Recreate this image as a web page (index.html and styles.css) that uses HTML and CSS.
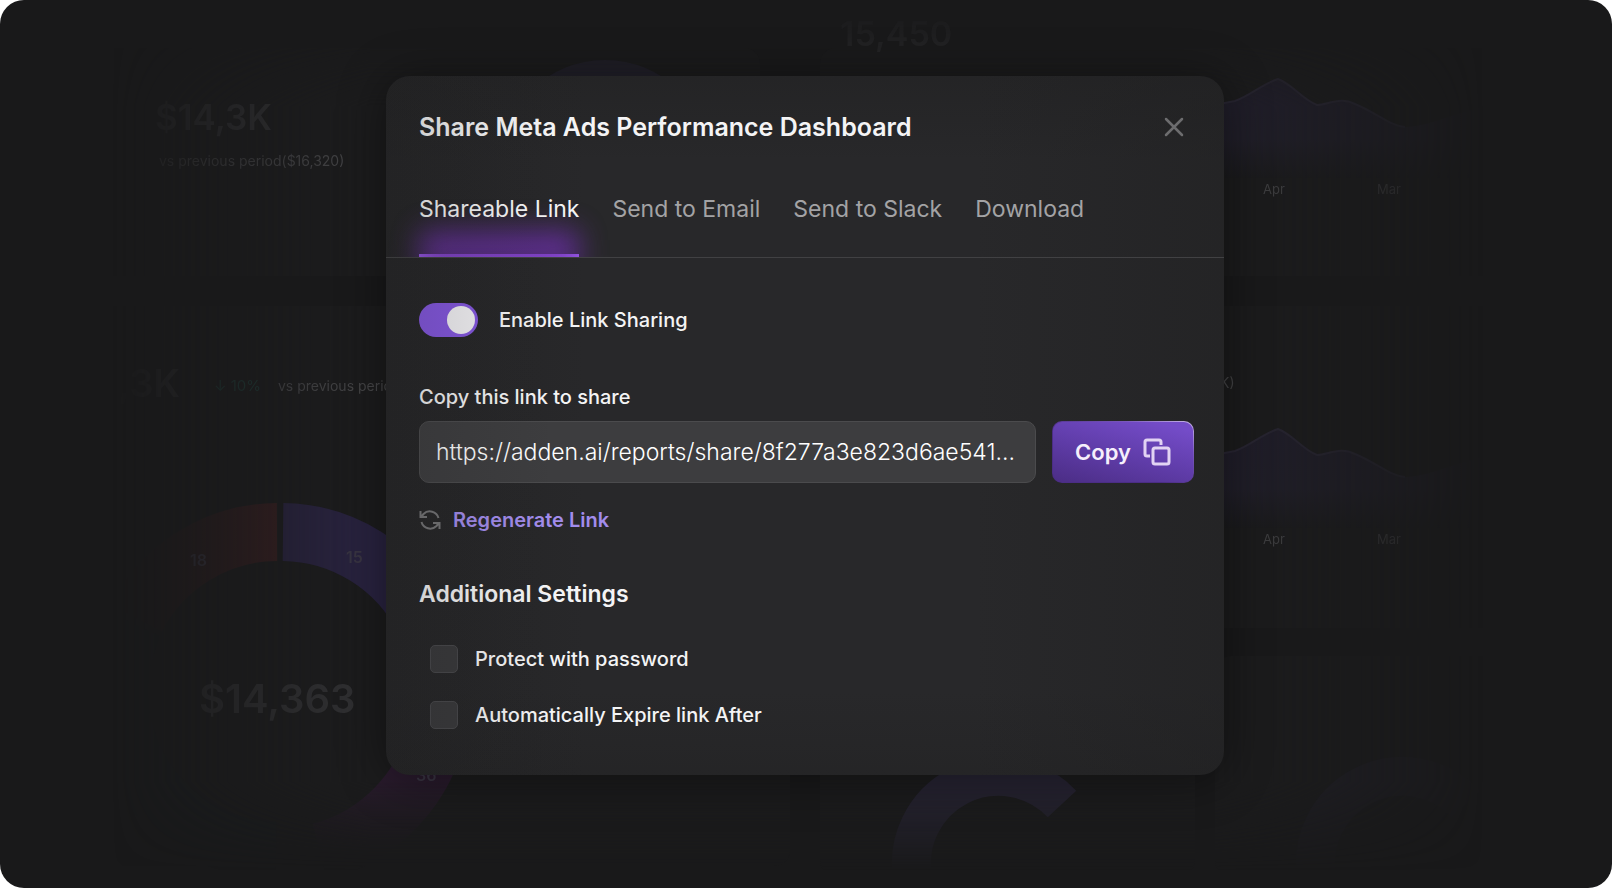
FILE: index.html
```
<!DOCTYPE html>
<html lang="en">
<head>
  <meta charset="UTF-8">
  <meta name="viewport" content="width=device-width, initial-scale=1.0">
  <title>Share Meta Ads Performance Dashboard</title>
  <link rel="stylesheet" href="styles.css">
</head>
<body>

  <div class="page">

    <!-- Dimmed dashboard behind the dialog -->
    <svg class="backdrop" viewBox="0 0 1612 888" preserveAspectRatio="xMidYMid slice" aria-hidden="true">
      <defs>
        <linearGradient id="area" x1="0" y1="0" x2="0" y2="1">
          <stop offset="0" stop-color="#211e2c"/>
          <stop offset="0.6" stop-color="#211f2a"/>
          <stop offset="1" stop-color="#1b1b1d"/>
        </linearGradient>
        <linearGradient id="red" x1="0" y1="0" x2="1" y2="0">
          <stop offset="0" stop-color="#1f1a1b"/>
          <stop offset="1" stop-color="#361e20"/>
        </linearGradient>
        <linearGradient id="pink" x1="0" y1="0" x2="0" y2="1">
          <stop offset="0.3" stop-color="#2c1b30"/>
          <stop offset="1" stop-color="#1c1b1d"/>
        </linearGradient>
        <g id="chart">
          <path fill="url(#area)" d="M1180 108 C1205 108 1220 104 1235 101 C1250 96 1262 84 1278 79 C1292 84 1303 100 1317 105 C1328 105 1340 96 1355 104 C1375 112 1390 126 1405 127 C1425 127 1450 115 1490 105 V178 H1180 Z"/>
          <path fill="none" stroke="#2a2735" stroke-width="2" d="M1180 108 C1205 108 1220 104 1235 101 C1250 96 1262 84 1278 79 C1292 84 1303 100 1317 105 C1328 105 1340 96 1355 104 C1375 112 1390 126 1405 127"/>
          <text class="muted" x="1263" y="194" font-size="13">Apr</text>
          <text class="muted" x="1377" y="194" font-size="13">Mar</text>
        </g>
      </defs>

      <g fill="#1c1c1d">
        <rect x="100" y="48" width="660" height="228" rx="16"/>
        <rect x="100" y="306" width="690" height="560" rx="16"/>
        <rect x="820" y="48" width="690" height="228" rx="16"/>
        <rect x="820" y="306" width="690" height="322" rx="16"/>
        <rect x="820" y="656" width="375" height="220" rx="16"/>
        <rect x="1215" y="656" width="295" height="220" rx="16"/>
      </g>

      <text class="figure" x="155" y="130" font-size="35">$14,3K</text>
      <text class="muted" x="159" y="166" font-size="14">vs previous period($16,320)</text>
      <text class="figure" x="118" y="397" font-size="38">,3K</text>
      <text class="up" x="214" y="391" font-size="15">↓ 10%</text>
      <text class="muted" x="278" y="391" font-size="14">vs previous period</text>
      <text class="figure" x="840" y="46" font-size="34">15,450</text>
      <text class="muted" x="1220" y="388" font-size="14">K)</text>

      <circle cx="605" cy="166" r="106" fill="#24222f"/>

      <!-- spend donut -->
      <g fill="none" stroke-width="58">
        <path stroke="#292340" d="M283 532 A160 160 0 0 1 424 620"/>
        <path stroke="url(#red)" d="M277 532 A160 160 0 0 0 136 618"/>
        <path stroke="#191d1f" d="M134 624 A160 160 0 0 0 276 851"/>
        <path stroke="url(#pink)" d="M438 728 A163 163 0 0 1 320 852"/>
      </g>
      <text class="figure" x="199" y="713" font-size="40">$14,363</text>
      <g class="slice" font-size="16">
        <text x="190" y="566">18</text>
        <text x="346" y="563">15</text>
        <text x="416" y="781">36</text>
      </g>

      <use href="#chart"/>
      <use href="#chart" y="350"/>

      <g fill="none" stroke="#272433" stroke-width="39">
        <path d="M913 880 A87 87 0 0 1 1062 804"/>
        <path stroke="#201f26" d="M1317 880 A87 87 0 0 1 1466 804"/>
      </g>
    </svg>

    <main class="modal" role="dialog" aria-labelledby="modal-title">
      <header class="modal-header">
        <h1 id="modal-title">Share Meta Ads Performance Dashboard</h1>
        <button class="close" type="button" aria-label="Close">
          <svg width="20" height="20" viewBox="0 0 20 20">
            <path d="M2 2 L18 18 M18 2 L2 18"/>
          </svg>
        </button>
      </header>

      <nav class="tabs">
        <a class="tab active" href="#link">Shareable Link</a>
        <a class="tab" href="#email">Send to Email</a>
        <a class="tab" href="#slack">Send to Slack</a>
        <a class="tab" href="#download">Download</a>
      </nav>

      <section class="content">
        <label class="switch">
          <input type="checkbox" role="switch" checked>
          <span>Enable Link Sharing</span>
        </label>

        <label class="field-label" for="shareLink">Copy this link to share</label>
        <div class="link-row">
          <input type="text" id="shareLink" value="https://adden.ai/reports/share/8f277a3e823d6ae541..." readonly>
          <button class="copy" type="button">
            Copy
            <svg width="28" height="28" viewBox="0 0 28 28">
              <rect x="10" y="10" width="16" height="16" rx="2"/>
              <path d="M7 18 H4 A2 2 0 0 1 2 16 V4 A2 2 0 0 1 4 2 H16 A2 2 0 0 1 18 4 V7"/>
            </svg>
          </button>
        </div>

        <button class="regenerate" type="button">
          <svg width="22" height="22" viewBox="0 0 22 22">
            <path d="M1.5 2 V8 H8 M2 8 L4.5 5 A9 9 0 0 1 19.5 9 M20.5 20 V14 H14 M20 14 L17.5 17 A9 9 0 0 1 2.5 13"/>
          </svg>
          Regenerate Link
        </button>

        <h2>Additional Settings</h2>
        <div class="options">
          <label class="option">
            <input type="checkbox">
            <span>Protect with password</span>
          </label>
          <label class="option">
            <input type="checkbox">
            <span>Automatically Expire link After</span>
          </label>
        </div>
      </section>
    </main>

  </div>

</body>
</html>
```
FILE: styles.css
```
* {
  box-sizing: border-box;
}

body {
  margin: 0;
  background-color: white;
  font-family: Inter, sans-serif;
  font-optical-sizing: none;
  color: #f4f4f5;
}

button,
input {
  font-family: inherit;
  margin: 0;
}

.page {
  position: relative;
  min-height: 100vh;
  padding: 76px 18px 32px 16px;
  background-color: #19191a;
  border-radius: 24px;
  overflow: hidden;
}

/* backdrop */

.backdrop {
  position: absolute;
  inset: 0;
  width: 100%;
  height: 100%;
  mask-image:
    linear-gradient(to right, transparent 7%, black 23%, black 75%, transparent 92%),
    linear-gradient(to bottom, transparent 1%, black 12%, black 88%, transparent 98%);
  mask-composite: intersect;
}

.figure {
  fill: #313133;
  font-weight: 600;
}

.muted {
  fill: #464648;
}

.up {
  fill: #1f3a36;
}

.slice {
  fill: #3a3644;
  font-weight: 600;
}

/* modal */

.modal {
  position: relative;
  max-width: 838px;
  margin: 0 auto;
  background:
    linear-gradient(to right, rgba(32, 32, 33, 0.5), transparent 24%),
    linear-gradient(to left, rgba(32, 32, 33, 0.5), transparent 30%),
    linear-gradient(to bottom, rgba(32, 32, 33, 0.5), transparent 12%),
    linear-gradient(to top, rgba(32, 32, 33, 0.4), transparent 12%),
    #28282a;
  border-radius: 24px;
  box-shadow: 0 4px 48px rgba(0, 0, 0, 0.45);
  overflow: hidden;
}

/* soft shade over the left edge */
.modal::after {
  content: "";
  position: absolute;
  inset: 0;
  pointer-events: none;
  background: linear-gradient(to right, rgba(32, 32, 33, 0.2), transparent 20%);
}

.modal-header {
  display: flex;
  justify-content: space-between;
  align-items: center;
  padding: 32px 40px 0 33px;
}

h1 {
  margin: 0;
  font-size: 25px;
  line-height: 38px;
  font-weight: 600;
}

.close {
  display: flex;
  padding: 0;
  background: none;
  border: none;
  cursor: pointer;
}

.close svg {
  fill: none;
  stroke: #6c6c6e;
  stroke-width: 2.5;
  stroke-linecap: round;
}

.tabs {
  display: flex;
  gap: 33px;
  margin-top: 47px;
  padding: 0 33px;
  border-bottom: 1px solid #414143;
  overflow: hidden;
}

.tab {
  position: relative;
  padding-bottom: 32px;
  font-size: 23px;
  line-height: 32px;
  color: #a3a3a5;
  text-decoration: none;
}

.tab.active {
  color: #f4f4f5;
  border-bottom: 3px solid #a566fa;
  padding-bottom: 29px;
  z-index: 0;
}

/* glow behind the active tab */
.tab.active::before {
  content: "";
  position: absolute;
  left: 0;
  right: 0;
  bottom: -16px;
  height: 40px;
  z-index: -1;
  background-color: #6a2fa6;
  opacity: 0.8;
  filter: blur(14px);
}

.content {
  display: flex;
  flex-direction: column;
  align-items: flex-start;
  padding: 45px 30px 46px 33px;
}

.switch {
  display: flex;
  align-items: center;
  gap: 21px;
  font-size: 20px;
  line-height: 34px;
  font-weight: 500;
}

.switch input {
  appearance: none;
  display: flex;
  justify-content: flex-end;
  width: 59px;
  height: 34px;
  padding: 3px;
  border-radius: 17px;
  background-color: #8356de;
  cursor: pointer;
}

.switch input::before {
  content: "";
  width: 28px;
  height: 28px;
  border-radius: 50%;
  background-color: #f2f1f4;
}

.field-label {
  margin-top: 45px;
  font-size: 20px;
  line-height: 30px;
  font-weight: 500;
}

.link-row {
  display: flex;
  gap: 16px;
  width: 100%;
  margin-top: 9px;
}

.link-row input {
  flex: 1;
  min-width: 0;
  height: 62px;
  padding: 0 16px;
  font-size: 23px;
  font-weight: 300;
  color: #fff;
  background-color: #3d3d3f;
  border: 1px solid #4b4b4d;
  border-radius: 10px;
  outline: none;
}

.copy {
  display: flex;
  justify-content: center;
  align-items: center;
  gap: 12px;
  width: 142px;
  height: 62px;
  padding: 0;
  font-size: 22px;
  font-weight: 600;
  color: #f6effc;
  background:
    linear-gradient(15deg, #4b2d85, #5f3ca8 45%, #744cc8 90%) padding-box,
    linear-gradient(25deg, #4b2d85 40%, #7a58bd 75%, #c9b6ea) border-box;
  border: 1px solid transparent;
  border-radius: 10px;
  cursor: pointer;
}

.copy svg {
  fill: none;
  stroke: #e2d3f3;
  stroke-width: 3;
}

.regenerate {
  display: flex;
  align-items: center;
  gap: 12px;
  margin-top: 22px;
  padding: 0;
  font-size: 20px;
  line-height: 30px;
  font-weight: 600;
  color: #a28cec;
  background: none;
  border: none;
  cursor: pointer;
}

.regenerate svg {
  fill: none;
  stroke: #747476;
  stroke-width: 2;
}

h2 {
  margin: 42px 0 0;
  font-size: 23px;
  line-height: 34px;
  font-weight: 600;
}

.options {
  display: flex;
  flex-direction: column;
  gap: 28px;
  margin: 34px 0 0 11px;
}

.option {
  display: flex;
  align-items: center;
  gap: 17px;
  font-size: 20px;
  line-height: 28px;
  font-weight: 500;
}

.option input {
  appearance: none;
  width: 28px;
  height: 28px;
  background-color: #38383a;
  border: 1px solid #47474a;
  border-radius: 5px;
  cursor: pointer;
}
```
